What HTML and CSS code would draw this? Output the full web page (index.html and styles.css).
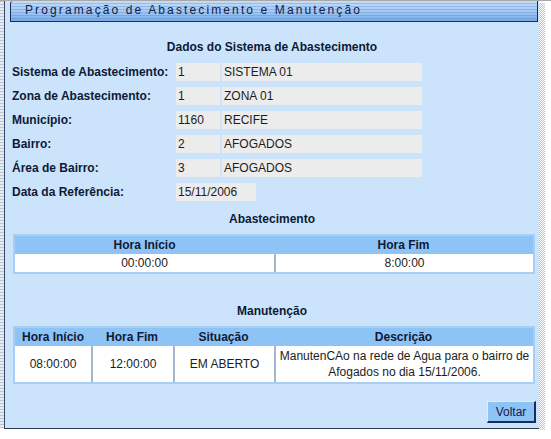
FILE: index.html
```html
<!DOCTYPE html>
<html lang="pt">
<head>
<meta charset="utf-8">
<title>Programação de Abastecimento e Manutenção</title>
<link rel="stylesheet" href="styles.css">
</head>
<body>
<div class="screen">
  <div class="ruler"></div>
  <div class="panel">
    <div class="titlebar"><span>Programação de Abastecimento e Manutenção</span></div>

    <h2 class="section sec-dados">Dados do Sistema de Abastecimento</h2>
    <div class="form">
      <div class="row"><span class="lbl">Sistema de Abastecimento:</span><span class="fld code">1</span><span class="fld name">SISTEMA 01</span></div>
      <div class="row"><span class="lbl">Zona de Abastecimento:</span><span class="fld code">1</span><span class="fld name">ZONA 01</span></div>
      <div class="row"><span class="lbl">Município:</span><span class="fld code">1160</span><span class="fld name">RECIFE</span></div>
      <div class="row"><span class="lbl">Bairro:</span><span class="fld code">2</span><span class="fld name">AFOGADOS</span></div>
      <div class="row"><span class="lbl">Área de Bairro:</span><span class="fld code">3</span><span class="fld name">AFOGADOS</span></div>
      <div class="row"><span class="lbl">Data da Referência:</span><span class="fld date">15/11/2006</span></div>
    </div>

    <h2 class="section sec-abs">Abastecimento</h2>
    <table class="grid grid-abs">
      <thead>
        <tr><th>Hora Início</th><th>Hora Fim</th></tr>
      </thead>
      <tbody>
        <tr><td>00:00:00</td><td>8:00:00</td></tr>
      </tbody>
    </table>

    <h2 class="section sec-man">Manutenção</h2>
    <table class="grid grid-man">
      <colgroup>
        <col class="c1"><col class="c2"><col class="c3"><col class="c4">
      </colgroup>
      <thead>
        <tr><th>Hora Início</th><th>Hora Fim</th><th>Situação</th><th>Descrição</th></tr>
      </thead>
      <tbody>
        <tr><td>08:00:00</td><td>12:00:00</td><td>EM ABERTO</td><td class="desc">ManutenCAo na rede de Agua para o bairro de Afogados no dia 15/11/2006.</td></tr>
      </tbody>
    </table>

    <div class="actions"><button class="btn" type="button">Voltar</button></div>
  </div>
  <div class="shadow"></div>
</div>
</body>
</html>
```

FILE: styles.css
```css
html, body {
  margin: 0;
  padding: 0;
  background: #ffffff;
}

body {
  font-family: "Liberation Sans", Arial, sans-serif;
  font-size: 12px;
  color: #1a1a1a;
}

.screen {
  width: 551px;
  height: 431px;
  display: flex;
  border-top: 1px solid #a9a9a9;
  box-sizing: border-box;
}

.ruler {
  width: 4px;
  height: 427px;
  background: repeating-linear-gradient(to bottom, #b8c4d0 0 1px, #e4edf6 1px 3px);
}

.panel {
  width: 535px;
  height: 428px;
  box-sizing: border-box;
  background: #cbe4fb;
  border-left: 1px solid #3a4a66;
  border-bottom: 1px solid #2a3850;
  display: flex;
  flex-direction: column;
}

.shadow {
  width: 6px;
  height: 427px;
  margin-top: 2px;
  background: repeating-conic-gradient(#c4c4c4 0 25%, #ffffff 0 50%) 0 0 / 2px 2px;
}

.titlebar {
  margin-left: 5px;
  width: 528px;
  height: 21px;
  box-sizing: border-box;
  border: 1px solid #1b2b5a;
  border-top: none;
  border-radius: 3px 0 0 0;
  background:
    repeating-linear-gradient(to bottom, rgba(255,255,255,0) 0 2px, rgba(70,120,200,0.30) 2px 3px),
    linear-gradient(to bottom, #c3ddf9 0%, #a4c9f3 55%, #78a9e4 100%);
  padding-left: 14px;
  line-height: 19px;
  letter-spacing: 2.12px;
  color: #13224a;
  font-size: 12px;
  white-space: nowrap;
}

.section {
  margin: 0;
  font-size: 12px;
  font-weight: bold;
  line-height: 14px;
  text-align: center;
  color: #0e1a36;
}

.sec-dados { margin-top: 18px; }
.sec-abs { margin-top: 11px; }
.sec-man { margin-top: 30px; }

.form {
  margin-top: 9px;
  padding-left: 7px;
  display: flex;
  flex-direction: column;
  gap: 6px;
}

.row {
  display: flex;
  align-items: center;
  height: 18px;
}

.lbl {
  width: 164px;
  font-weight: bold;
  color: #0e1a36;
  white-space: nowrap;
}

.fld {
  height: 18px;
  line-height: 18px;
  background: #ececec;
  padding-left: 2px;
  box-sizing: border-box;
  color: #1c1c1c;
  white-space: nowrap;
}

.code { width: 44px; margin-right: 2px; }
.name { width: 200px; padding-left: 2px; }
.date { width: 80px; }

.grid {
  margin-top: 8px;
  margin-left: 8px;
  width: 522px;
  border: 2px solid #a8cef4;
  border-spacing: 0;
  border-collapse: separate;
  table-layout: fixed;
}

.grid th {
  background: #8ec3f6;
  height: 18px;
  padding: 0;
  font-weight: bold;
  color: #0e1a36;
  text-align: center;
  line-height: 18px;
}

.grid td {
  background: #ffffff;
  padding: 0;
  text-align: center;
  color: #1c1c1c;
}

.grid td + td {
  border-left: 2px solid #a3b8cf;
}

.grid-abs td {
  height: 18px;
  line-height: 18px;
}

.grid-man col.c1 { width: 76px; }
.grid-man col.c2 { width: 82px; }
.grid-man col.c3 { width: 101px; }

.grid-man td {
  height: 36px;
  line-height: 16px;
  padding: 2px 0;
  box-sizing: border-box;
}

.grid-man td.desc {
  padding: 2px 1px;
}

.actions {
  margin-top: 17px;
  display: flex;
  justify-content: flex-end;
  padding-right: 3px;
}

.btn {
  width: 49px;
  height: 22px;
  padding: 0;
  margin: 0;
  font-family: "Liberation Sans", Arial, sans-serif;
  font-size: 12px;
  color: #14204a;
  background: #8ec3f6;
  border-style: solid;
  border-width: 1px 2px 2px 1px;
  border-color: #dcecfc #1e2b56 #1e2b56 #dcecfc;
  border-radius: 0;
}
```
